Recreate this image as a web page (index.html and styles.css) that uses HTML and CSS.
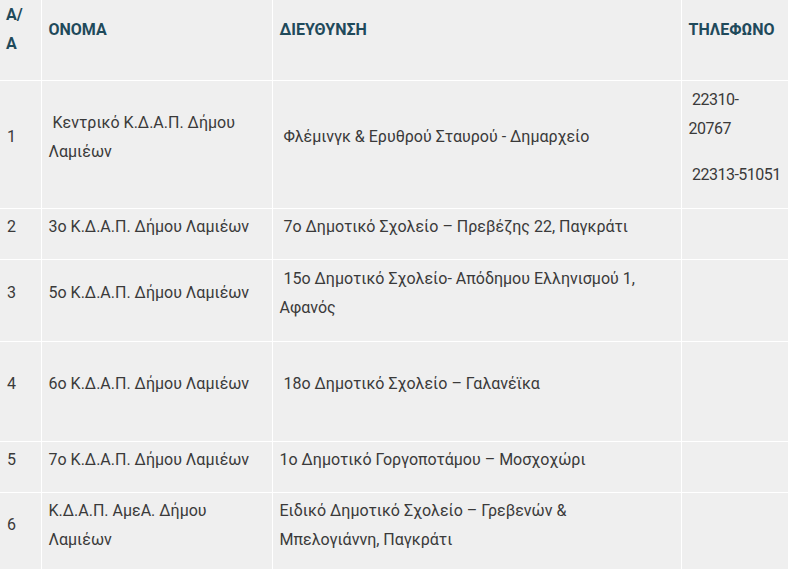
FILE: index.html
```html
<!DOCTYPE html>
<html lang="el">
<head>
<meta charset="utf-8">
<title>Κ.Δ.Α.Π. Δήμου Λαμιέων</title>
<link rel="stylesheet" href="styles.css">
</head>
<body>
<table class="kdap">
  <colgroup>
    <col class="c-aa">
    <col class="c-name">
    <col class="c-addr">
    <col class="c-tel">
  </colgroup>
  <thead>
    <tr class="r-head">
      <th class="top">Α/<br>Α</th>
      <th>ΟΝΟΜΑ</th>
      <th>ΔΙΕΥΘΥΝΣΗ</th>
      <th>ΤΗΛΕΦΩΝΟ</th>
    </tr>
  </thead>
  <tbody>
    <tr class="r1">
      <td>1</td>
      <td>&nbsp;Κεντρικό Κ.Δ.Α.Π. Δήμου Λαμιέων</td>
      <td>&nbsp;Φλέμινγκ &amp; Ερυθρού Σταυρού - Δημαρχείο</td>
      <td class="tel"><p>&nbsp;22310-<br>20767</p><p class="nowrap">&nbsp;22313-51051</p></td>
    </tr>
    <tr class="r2">
      <td>2</td>
      <td>3ο Κ.Δ.Α.Π. Δήμου Λαμιέων</td>
      <td>&nbsp;7ο Δημοτικό Σχολείο – Πρεβέζης 22, Παγκράτι</td>
      <td></td>
    </tr>
    <tr class="r3">
      <td>3</td>
      <td>5ο Κ.Δ.Α.Π. Δήμου Λαμιέων</td>
      <td>&nbsp;15ο Δημοτικό Σχολείο- Απόδημου Ελληνισμού 1, Αφανός</td>
      <td></td>
    </tr>
    <tr class="r4">
      <td>4</td>
      <td>6ο Κ.Δ.Α.Π. Δήμου Λαμιέων</td>
      <td>&nbsp;18ο Δημοτικό Σχολείο – Γαλανέϊκα</td>
      <td></td>
    </tr>
    <tr class="r5">
      <td>5</td>
      <td>7ο Κ.Δ.Α.Π. Δήμου Λαμιέων</td>
      <td>1ο Δημοτικό Γοργοποτάμου – Μοσχοχώρι</td>
      <td></td>
    </tr>
    <tr class="r6">
      <td>6</td>
      <td>Κ.Δ.Α.Π. ΑμεΑ. Δήμου Λαμιέων</td>
      <td>Ειδικό Δημοτικό Σχολείο – Γρεβενών &amp;<br>Μπελογιάννη, Παγκράτι</td>
      <td></td>
    </tr>
  </tbody>
</table>
</body>
</html>
```
FILE: styles.css
```css
html, body {
  margin: 0;
  padding: 0;
  background: #ffffff;
}

body {
  font-family: Roboto, "Noto Sans", sans-serif;
  font-size: 16px;
  line-height: 29px;
  color: #3a3a3a;
}

.kdap {
  width: 788px;
  table-layout: fixed;
  border-collapse: collapse;
  border-style: hidden;
  background: #efefef;
}

.c-aa { width: 41px; }
.c-name { width: 231px; }
.c-addr { width: 409px; }
.c-tel { width: 107px; }

.kdap th,
.kdap td {
  border: 1px solid #ffffff;
  padding: 3px 7px 18px 7px;
  vertical-align: middle;
  text-align: left;
}

.kdap th {
  font-size: 16px;
  font-weight: 700;
  color: #1f4a5b;
  padding-top: 0;
  padding-bottom: 20px;
}

.kdap th.top {
  vertical-align: top;
  padding-left: 6px;
  padding-right: 4px;
}

.tel {
  letter-spacing: -0.5px;
}

.tel p {
  margin: 0 0 17px 0;
}
.tel p:last-child {
  margin-bottom: 0;
}
.tel .nowrap {
  white-space: nowrap;
}

.r-head { height: 80px; }
.r1 { height: 128px; }
.r2 { height: 51px; }
.r3 { height: 82px; }
.r4 { height: 100px; }
.r5 { height: 50px; }
.r6 { height: 80px; }
```
